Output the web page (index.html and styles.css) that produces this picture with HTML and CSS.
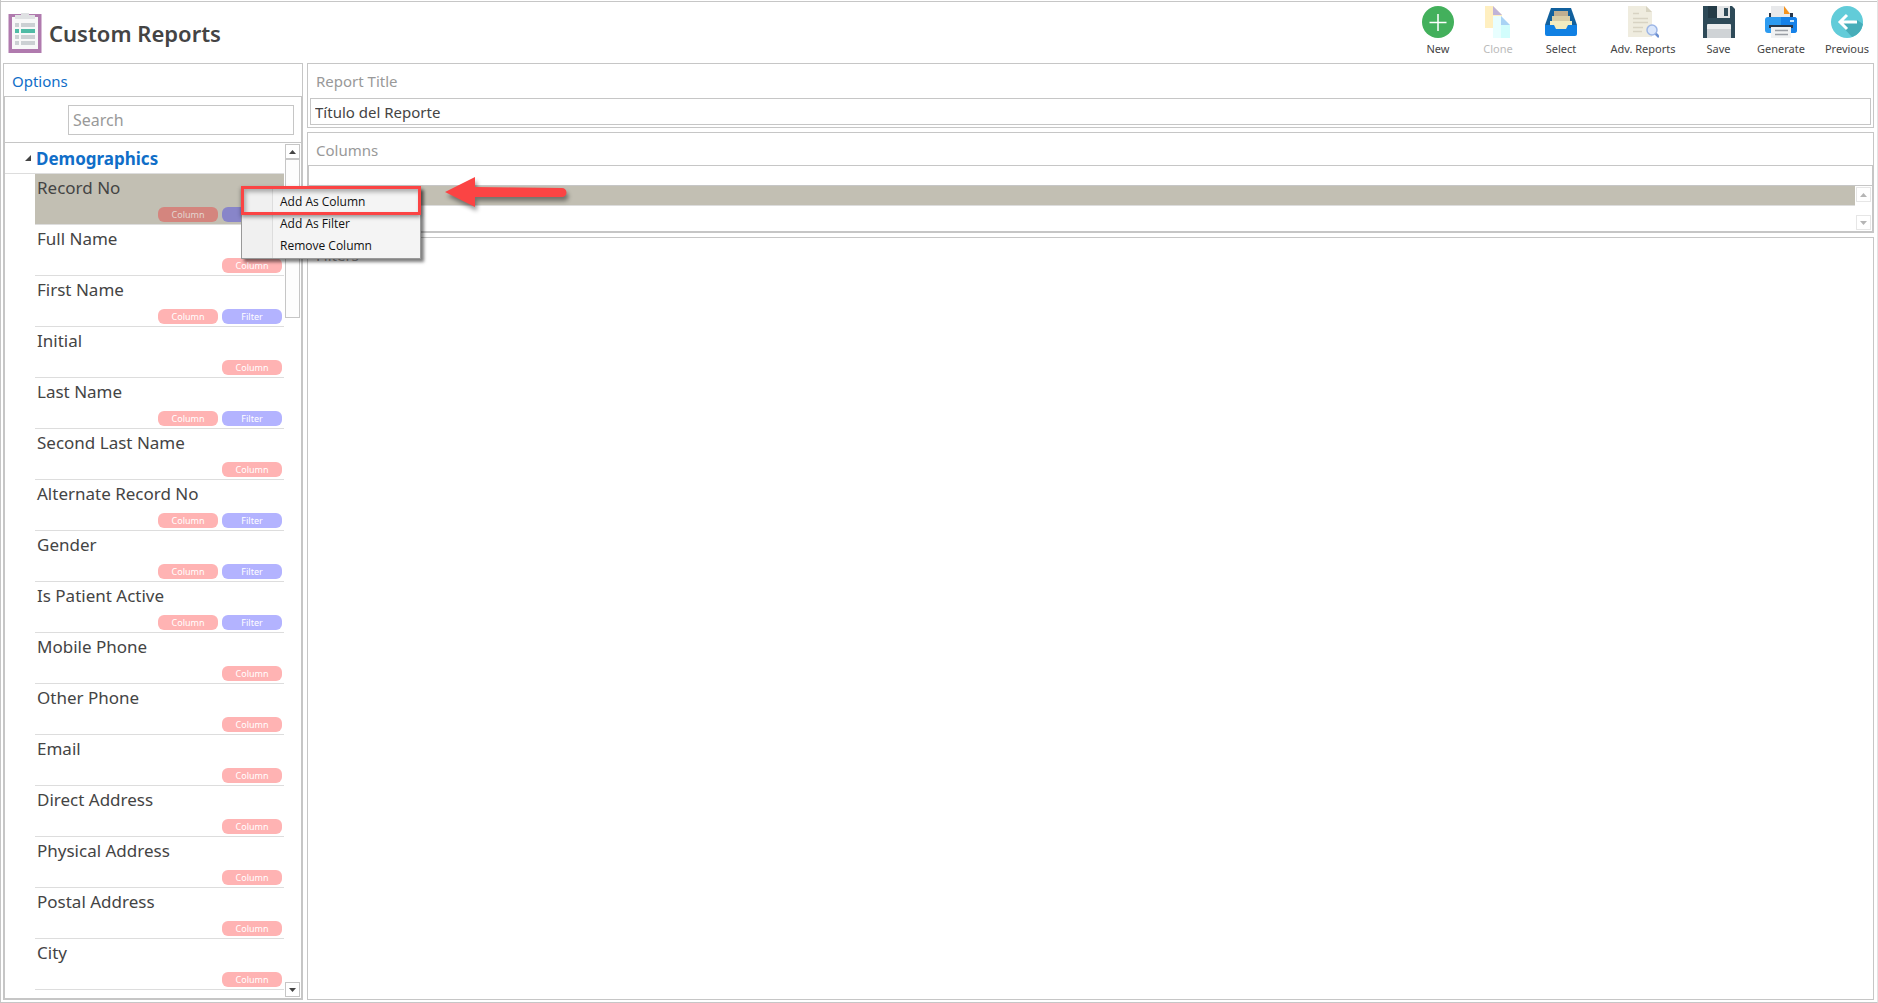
FILE: index.html
```html
<!DOCTYPE html>
<html lang="en">
<head>
  <meta charset="UTF-8" />
  <title>Custom Reports</title>
  <link rel="stylesheet" href="styles.css">
</head>
<body>
  <div class="app">
    <header class="header">
      <svg class="logo" viewBox="0 0 34 40" width="34" height="40">
        <rect x="0.500" y="1" width="33" height="39" fill="#b07aae"/>
        <rect x="4" y="4" width="26" height="32" fill="#f7f8f8"/>
        <path d="M7 2h6V0h8v2h6v4H7z" fill="#dfe1e3"/>
        <path d="M7 10h4v4H7zM13 10h14v4H13zM7 22h4v4H7zM13 22h14v4H13zM7 28h4v4H7zM13 28h14v4H13z" fill="#cbd0d3"/>
        <path d="M7 16h4v4H7zM13 16h14v4H13z" fill="#4fbba5"/>
      </svg>
      <h1>Custom Reports</h1>

      <nav class="toolbar">
        <button class="tool">
          <svg viewBox="0 0 32 32" width="32" height="32">
            <circle cx="16" cy="16" r="16" fill="#43b05c"/>
            <path d="M16 8v17M7.500 16.500h17" stroke="#fff" stroke-width="1.500"/>
          </svg>
          New
        </button>
        <button class="tool" disabled>
          <svg viewBox="0 0 32 32" width="32" height="32">
            <path d="M3 0h8l9 9v13H3z" fill="#ffefc0"/>
            <path d="M11 0l9 9h-9z" fill="#c0b4d8"/>
            <path d="M11 10h8l9 9v13H11z" fill="#e8fefe"/>
            <path d="M19 19h9v13h-9z" fill="#d2fdfc"/>
            <path d="M19 10l9 9h-9z" fill="#a9d3f5"/>
          </svg>
          Clone
        </button>
        <button class="tool">
          <svg viewBox="0 0 32 32" width="32" height="32">
            <path d="M6 2h20l6 17v4H0v-4z" fill="#11609d"/>
            <path d="M9 5h14v5H9z" fill="#bfae90"/>
            <path d="M7 10h18v5H7z" fill="#d9cda6"/>
            <path d="M5 15h22v9H5z" fill="#f3ecc0"/>
            <path d="M0 19h9l2 4h10l2-4h9v9q0 2-2 2H2q-2 0-2-2z" fill="#1080e3"/>
          </svg>
          Select
        </button>
        <button class="tool">
          <svg viewBox="0 0 32 32" width="32" height="32">
            <path d="M1 0h18l6 6v25H1z" fill="#efecdf"/>
            <path d="M19 0l6 6h-6z" fill="#d8d4c2"/>
            <path d="M6 7.500h6M6 12.500h15M6 16.500h15M6 21.500h10M6 25.500h9" stroke="#d8d3c3" stroke-width="1.500"/>
            <path d="M28 27l4 4" stroke="#6b8fd0" stroke-width="2.500"/>
            <circle cx="25" cy="24" r="5" fill="#dbe7fb" stroke="#9db6e6" stroke-width="1.500"/>
          </svg>
          Adv. Reports
        </button>
        <button class="tool">
          <svg viewBox="0 0 32 32" width="32" height="32">
            <path d="M0 0h29l3 3v29H0z" fill="#2e4a58"/>
            <path d="M5 0h22v12H5z" fill="#243b47"/>
            <path d="M14 0h13v12H14z" fill="#e3e5e7"/>
            <path d="M21 2h4v8h-4z" fill="#2e4a58"/>
            <path d="M4 19q0-1 1-1h22q1 0 1 1v13H4z" fill="#eceeef"/>
            <path d="M4 23h24v9H4z" fill="#cfd3d6"/>
          </svg>
          Save
        </button>
        <button class="tool">
          <svg viewBox="0 0 32 32" width="32" height="32">
            <path d="M4 7h24v6H4z" fill="#29384a"/>
            <path d="M6 0h13l6 7v7H6z" fill="#e8e9eb"/>
            <path d="M19 0l6 8h-6z" fill="#f7941e"/>
            <path d="M0 14q0-3 3-3h26q3 0 3 3v10q0 3-3 3H3q-3 0-3-3z" fill="#2d9bf0"/>
            <path d="M16 11h13q3 0 3 3v10q0 3-3 3H16z" fill="#1681e8"/>
            <path d="M4 19h24v3H4z" fill="#29384a"/>
            <path d="M6 21h20v11H6z" fill="#f1f2f3"/>
            <path d="M10 24.500h13M10 28.500h13" stroke="#9a9ea5" stroke-width="1.500"/>
            <path d="M25 14h4v2h-4z" fill="#c4e4fb"/>
          </svg>
          Generate
        </button>
        <button class="tool">
          <svg viewBox="0 0 32 32" width="32" height="32">
            <circle cx="16" cy="16" r="16" fill="#62ccd9"/>
            <path d="M8 17l13 14q9-3 11-13l-6-4-9 3z" fill="#47adb9"/>
            <path d="M26 16H9M16 9l-7 7 7 7" fill="none" stroke="#fff" stroke-width="3"/>
          </svg>
          Previous
        </button>
      </nav>
    </header>

    <main class="content">
      <aside class="panel sidebar">
        <h2 class="panel-title options-title">Options</h2>
        <div class="options">
          <div class="search-row">
            <input class="search" type="text" placeholder="Search" aria-label="Search">
          </div>
          <div class="tree-wrap">
            <div class="tree">
              <h3 class="group"><svg viewBox="0 0 6 6" width="6" height="6"><path d="M6 0v6H0z"/></svg>Demographics</h3>
              <ul class="fields">
                <li class="field selected">Record No<div class="tags"><span class="tag column">Column</span><span class="tag filter">Filter</span></div></li>
                <li class="field">Full Name<div class="tags"><span class="tag column">Column</span></div></li>
                <li class="field">First Name<div class="tags"><span class="tag column">Column</span><span class="tag filter">Filter</span></div></li>
                <li class="field">Initial<div class="tags"><span class="tag column">Column</span></div></li>
                <li class="field">Last Name<div class="tags"><span class="tag column">Column</span><span class="tag filter">Filter</span></div></li>
                <li class="field">Second Last Name<div class="tags"><span class="tag column">Column</span></div></li>
                <li class="field">Alternate Record No<div class="tags"><span class="tag column">Column</span><span class="tag filter">Filter</span></div></li>
                <li class="field">Gender<div class="tags"><span class="tag column">Column</span><span class="tag filter">Filter</span></div></li>
                <li class="field">Is Patient Active<div class="tags"><span class="tag column">Column</span><span class="tag filter">Filter</span></div></li>
                <li class="field">Mobile Phone<div class="tags"><span class="tag column">Column</span></div></li>
                <li class="field">Other Phone<div class="tags"><span class="tag column">Column</span></div></li>
                <li class="field">Email<div class="tags"><span class="tag column">Column</span></div></li>
                <li class="field">Direct Address<div class="tags"><span class="tag column">Column</span></div></li>
                <li class="field">Physical Address<div class="tags"><span class="tag column">Column</span></div></li>
                <li class="field">Postal Address<div class="tags"><span class="tag column">Column</span></div></li>
                <li class="field">City<div class="tags"><span class="tag column">Column</span></div></li>
              </ul>
            </div>
            <div class="scrollbar">
              <button class="scroll-btn" aria-label="Scroll up"><svg viewBox="0 0 7 4" width="7" height="4"><path d="M0 4L3.500 0 7 4z"/></svg></button>
              <div class="thumb"></div>
              <button class="scroll-btn" aria-label="Scroll down"><svg viewBox="0 0 7 4" width="7" height="4"><path d="M0 0h7L3.500 4z"/></svg></button>
            </div>
          </div>
        </div>
      </aside>

      <div class="report">
        <section class="panel">
          <label class="panel-title" for="title">Report Title</label>
          <div class="title-row"><input class="title-input" id="title" type="text" value="Título del Reporte"></div>
        </section>
        <section class="panel">
          <h2 class="panel-title">Columns</h2>
          <div class="grid-box">
            <div class="grid-head"></div>
            <div class="grid-body">
              <div class="grid-row"></div>
              <div class="scrollbar muted">
                <button class="scroll-btn" aria-label="Scroll columns up" disabled><svg viewBox="0 0 7 4" width="7" height="4"><path d="M0 4L3.500 0 7 4z"/></svg></button>
                <button class="scroll-btn" aria-label="Scroll columns down" disabled><svg viewBox="0 0 7 4" width="7" height="4"><path d="M0 0h7L3.500 4z"/></svg></button>
              </div>
            </div>
          </div>
        </section>
        <section class="panel filters">
          <h2 class="panel-title">Filters</h2>
        </section>
      </div>
    </main>

    <div class="context-menu">
      <button>Add As Column</button>
      <button>Add As Filter</button>
      <button>Remove Column</button>
      <div class="highlight"></div>
    </div>
    <svg class="arrow" viewBox="0 0 122 30" width="122" height="30">
      <path d="M0 15L30 0v10l87 1a4 4 0 0 1 0 9l-87 0v10z" fill="#fb4444"/>
    </svg>
  </div>
</body>
</html>
```

FILE: styles.css
```css
* {
  box-sizing: border-box;
}
body {
  margin: 0;
  font-family: "Noto Sans", "Open Sans", sans-serif;
  background: #fff;
  color: #444;
}
h1, h2, h3, ul {
  margin: 0;
  padding: 0;
  font-weight: normal;
}
button, input {
  font-family: inherit;
  color: inherit;
}
.app {
  position: relative;
  display: flex;
  flex-direction: column;
  height: 100vh;
  padding: 1px 3px 2px 2px;
  border: 1px solid #c6c6c6;
  border-right-color: #e4e4e4;
  border-top: none;
}

/* header */
.header {
  display: flex;
  align-items: center;
  height: 62px;
  margin: 0 -3px 0 -2px;
  padding-left: 7px;
  border-top: 1px solid #c6c6c6;
  flex-shrink: 0;
}
h1 {
  flex: 1;
  margin-left: 7px;
  font-size: 22px;
  font-weight: 600;
}
.toolbar {
  display: grid;
  grid-template-columns: 60px 60px 66px 98px 53px 72px 60px;
  align-self: flex-start;
}
.tool {
  display: flex;
  flex-direction: column;
  align-items: center;
  gap: 3px;
  padding: 4px 0 0;
  border: none;
  background: none;
  font-size: 11px;
  line-height: 16px;
  white-space: nowrap;
}
.tool:disabled {
  color: #bbb;
}

/* panels */
.content {
  display: flex;
  flex: 1;
  gap: 4px;
  min-height: 0;
}
.panel {
  border: 1px solid #c6c6c6;
}
.panel-title {
  display: block;
  height: 32px;
  padding: 0 8px;
  font-size: 15px;
  line-height: 34px;
  color: #999;
}
.sidebar {
  display: flex;
  flex-direction: column;
  width: 300px;
  flex-shrink: 0;
}
.options-title {
  color: #106ec8;
}
.options {
  display: flex;
  flex-direction: column;
  flex: 1;
  min-height: 0;
  border: 1px solid #c6c6c6;
}
.search-row {
  padding: 8px 7px 7px 63px;
  border-bottom: 1px solid #c6c6c6;
}
.search {
  display: block;
  width: 100%;
  height: 30px;
  padding: 0 4px;
  border: 1px solid #c6c6c6;
  font-size: 16px;
}
.search::placeholder {
  color: #999;
}

/* field tree */
.tree-wrap {
  display: flex;
  flex: 1;
  min-height: 0;
}
.tree {
  flex: 1;
  overflow: hidden;
}
.group {
  display: flex;
  align-items: center;
  gap: 5px;
  height: 31px;
  padding-left: 20px;
  border-bottom: 1px solid #ddd;
  font-size: 17px;
  font-weight: bold;
  color: #106ec8;
}
.group svg {
  fill: #444;
}
.fields {
  margin-left: 30px;
  list-style: none;
}
.field {
  display: flex;
  flex-direction: column;
  justify-content: space-between;
  height: 51px;
  padding: 2px;
  border-bottom: 1px solid #ddd;
  font-size: 17px;
  line-height: 24px;
}
.selected {
  background: #c2bfb3;
}
.tags {
  display: flex;
  justify-content: flex-end;
  gap: 4px;
}
.tag {
  width: 60px;
  height: 15px;
  border-radius: 6px;
  font-size: 9px;
  line-height: 15px;
  text-align: center;
  color: #fff;
}
.column { background: #ffb3b3; }
.filter { background: #b3b3ff; }
.selected .tag { color: #e4d5d0; }
.selected .column { background: #d4857e; }
.selected .filter { background: #8885c9; }

/* scrollbars */
.scrollbar {
  display: flex;
  flex-direction: column;
  width: 17px;
  padding: 1px;
}
.scroll-btn {
  display: flex;
  align-items: center;
  justify-content: center;
  width: 15px;
  height: 15px;
  padding: 0;
  border: 1px solid #c6c6c6;
  background: #fff;
  fill: #444;
}
.scroll-btn:last-child {
  margin-top: auto;
}
.thumb {
  height: 159px;
  border: 1px solid #c6c6c6;
  background: #fdfdfd;
}
.muted .scroll-btn {
  border-color: #e6e6e6;
  fill: #b5b5b5;
}

/* report editor */
.report {
  display: flex;
  flex-direction: column;
  flex: 1;
  gap: 4px;
  min-width: 0;
}
.title-row {
  padding: 2px;
}
.title-input {
  display: block;
  width: 100%;
  height: 27px;
  padding: 0 4px;
  border: 1px solid #c6c6c6;
  font-size: 15px;
}
.grid-box {
  border: 1px solid #c6c6c6;
}
.grid-head {
  height: 20px;
  border-bottom: 1px solid #c6c6c6;
}
.grid-body {
  display: flex;
  height: 45px;
}
.grid-row {
  flex: 1;
  height: 20px;
  border-bottom: 1px solid #ddd;
  background: #c2bfb3;
}
.filters {
  flex: 1;
}

/* context menu over the field list */
.context-menu {
  position: absolute;
  left: 240px;
  top: 187px;
  display: flex;
  flex-direction: column;
  width: 180px;
  padding: 2px 1px;
  border: 1px solid #999;
  background: linear-gradient(90deg, #f0f0f0 30px, #ddd 30px, #ddd 31px, #f4f4f4 31px);
  box-shadow: 3px 3px 3px rgba(0, 0, 0, 0.5);
}
.context-menu button {
  height: 22px;
  padding: 0 0 0 37px;
  border: none;
  background: none;
  font-family: "Open Sans", "Noto Sans", sans-serif;
  font-size: 12px;
  text-align: left;
  color: #111;
}
.highlight {
  position: absolute;
  left: -1px;
  top: -2px;
  width: 180px;
  height: 29px;
  border: 3px solid #fb4444;
  box-shadow: 0 2px 4px rgba(0, 0, 0, 0.4), inset 2px 3px 4px rgba(0, 0, 0, 0.3);
}
.arrow {
  position: absolute;
  left: 444px;
  top: 177px;
  filter: drop-shadow(2px 4px 2px rgba(0, 0, 0, 0.4));
}
```
